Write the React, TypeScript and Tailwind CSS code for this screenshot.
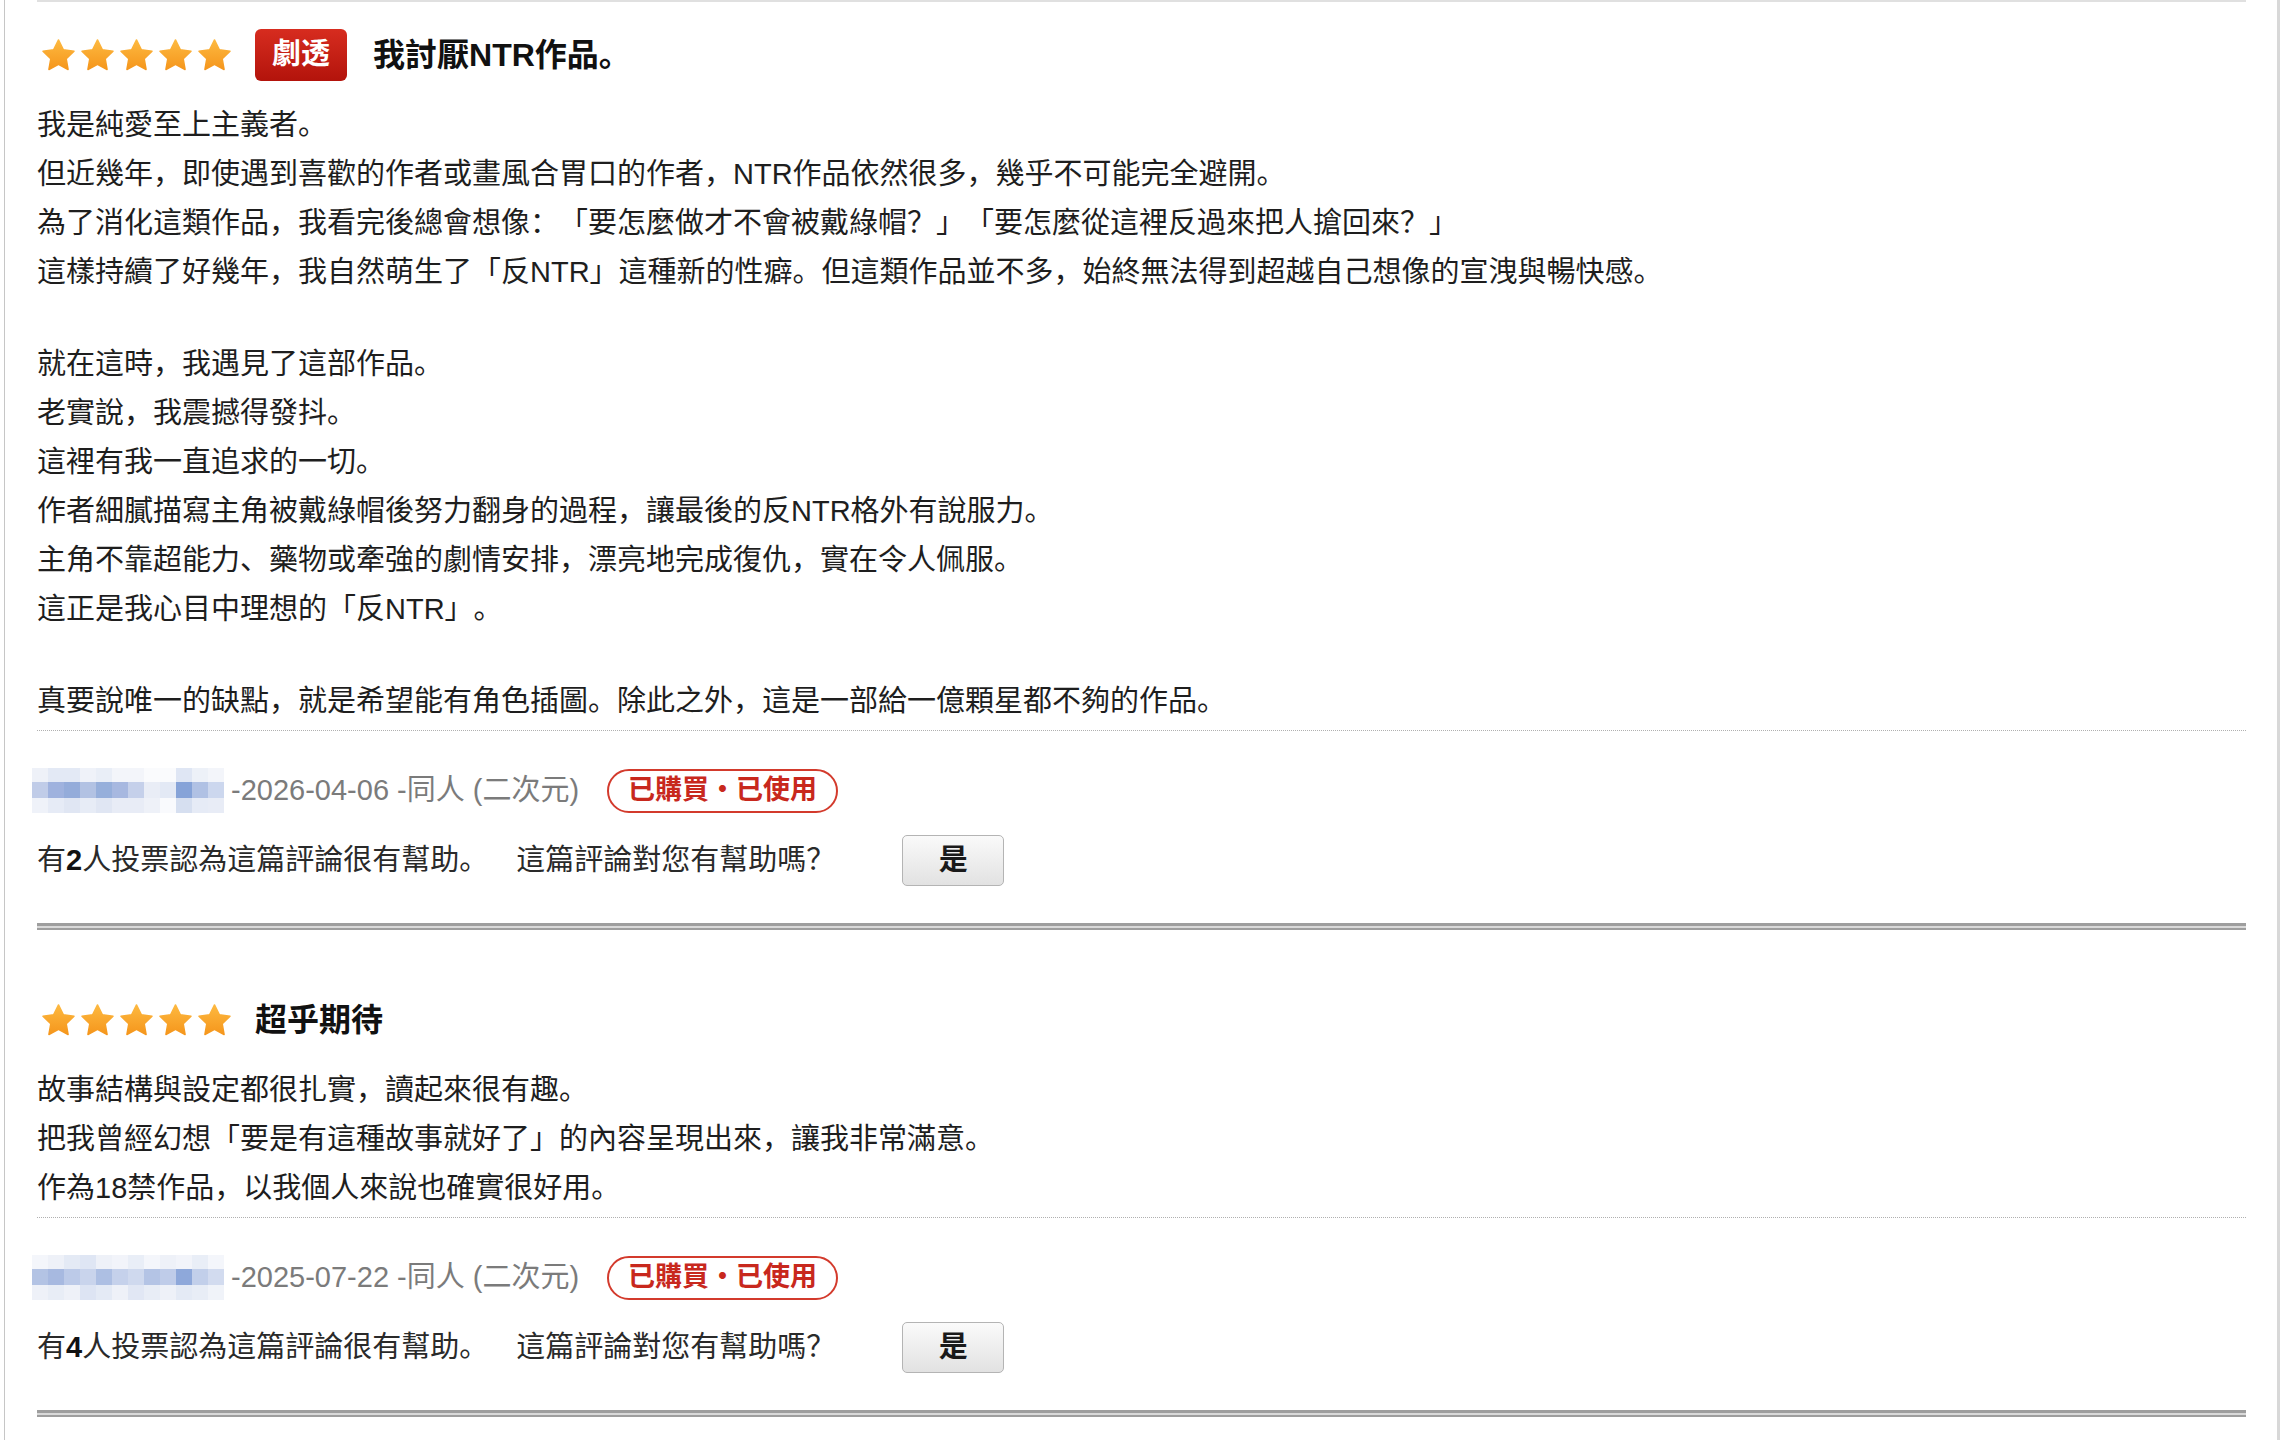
import type { ReactNode } from "react";

type Review = {
  title: string;
  spoiler?: boolean;
  paragraphs: string[][];
  date: string;
  category: string;
  helpful: number;
  mosaic: string[][];
};

const reviews: Review[] = [
  {
    title: "我討厭NTR作品。",
    spoiler: true,
    paragraphs: [
      [
        "我是純愛至上主義者。",
        "但近幾年，即使遇到喜歡的作者或畫風合胃口的作者，NTR作品依然很多，幾乎不可能完全避開。",
        "為了消化這類作品，我看完後總會想像：「要怎麼做才不會被戴綠帽？」「要怎麼從這裡反過來把人搶回來？」",
        "這樣持續了好幾年，我自然萌生了「反NTR」這種新的性癖。但這類作品並不多，始終無法得到超越自己想像的宣洩與暢快感。",
      ],
      [
        "就在這時，我遇見了這部作品。",
        "老實說，我震撼得發抖。",
        "這裡有我一直追求的一切。",
        "作者細膩描寫主角被戴綠帽後努力翻身的過程，讓最後的反NTR格外有說服力。",
        "主角不靠超能力、藥物或牽強的劇情安排，漂亮地完成復仇，實在令人佩服。",
        "這正是我心目中理想的「反NTR」。",
      ],
      ["真要說唯一的缺點，就是希望能有角色插圖。除此之外，這是一部給一億顆星都不夠的作品。"],
    ],
    date: "2026-04-06",
    category: "同人 (二次元)",
    helpful: 2,
    mosaic: [
      ["#eef1f8", "#e3e9f5", "#e3e9f5", "#eff2f9", "#e9eef7", "#f3f5fa", "#f3f5fa", "#fafbfd", "#fafbfd", "#dfe6f4", "#edf1f8", "#f3f5fa"],
      ["#c0cce8", "#9fb2de", "#94acda", "#b2c2e3", "#96afdb", "#a7b8e0", "#c5d0ea", "#e9edf6", "#e3e9f5", "#86a3d8", "#b0c1e4", "#ccd7ee"],
      ["#eff2f9", "#e6ebf6", "#e0e6f3", "#e7ecf6", "#e0e6f3", "#e8ecf6", "#e8ecf6", "#eef1f8", "#f9fafd", "#d6dff0", "#e6ebf6", "#e8ecf6"],
    ],
  },
  {
    title: "超乎期待",
    paragraphs: [
      [
        "故事結構與設定都很扎實，讀起來很有趣。",
        "把我曾經幻想「要是有這種故事就好了」的內容呈現出來，讓我非常滿意。",
        "作為18禁作品，以我個人來說也確實很好用。",
      ],
    ],
    date: "2025-07-22",
    category: "同人 (二次元)",
    helpful: 4,
    mosaic: [
      ["#f4f6fb", "#eef1f8", "#e4eaf5", "#dfe6f4", "#eef1f8", "#f2f4fa", "#e9eef7", "#f4f6fb", "#eef1f8", "#f2f4fa", "#e9eef7", "#f4f6fb"],
      ["#b3c3e4", "#a7b9e0", "#bccae8", "#c9d4ec", "#adbfe3", "#c5d1eb", "#cfd9ee", "#b4c4e5", "#bfcce9", "#8ea8da", "#c2cfea", "#d2dbef"],
      ["#eef1f8", "#e8edf6", "#eef1f8", "#dde4f3", "#e4eaf5", "#eef1f8", "#e1e7f4", "#e8edf6", "#eef1f8", "#e4eaf5", "#e8edf6", "#f0f3f9"],
    ],
  },
];

function Star() {
  return (
    <svg viewBox="0 0 24 24" className="h-[39px] w-[39px]">
      <defs>
        <linearGradient id="starFill" x1="0" y1="0" x2="0" y2="1">
          <stop offset="0%" stopColor="#fdb940" />
          <stop offset="100%" stopColor="#f5961c" />
        </linearGradient>
      </defs>
      <path
        d="M12 2.4l2.95 6.02 6.6.95-4.78 4.66 1.13 6.58L12 17.5l-5.9 3.11 1.13-6.58-4.78-4.66 6.6-.95z"
        fill="url(#starFill)"
        stroke="url(#starFill)"
        strokeWidth="0.9"
        strokeLinejoin="round"
      />
    </svg>
  );
}

// pixelated username block
function Mosaic({ cells }: { cells: string[][] }) {
  const rows = [0, 14, 30];
  const heights = [14, 16, 15];
  return (
    <svg width="192" height="45" className="-ml-[5px] shrink-0">
      {cells.map((row, r) =>
        row.map((c, i) => (
          <rect key={`${r}-${i}`} x={i * 16} y={rows[r]} width="16" height={heights[r]} fill={c} />
        ))
      )}
    </svg>
  );
}

function Pill({ children }: { children: ReactNode }) {
  return (
    <span className="flex h-[44px] items-center rounded-full border-2 border-[#d33a2c] px-[19px] text-[27px] font-bold text-[#c8281d]">
      {children}
    </span>
  );
}

function ReviewItem({ review, first }: { review: Review; first: boolean }) {
  return (
    <div className={first ? "pt-[27px]" : "pt-[64px]"}>
      <div className="flex h-[52px] items-center">
        <div className="ml-[2px] flex">
          {[0, 1, 2, 3, 4].map((i) => (
            <Star key={i} />
          ))}
        </div>
        {review.spoiler && (
          <span className="ml-[21px] flex h-[52px] items-center rounded-[6px] bg-gradient-to-b from-[#d72c1f] to-[#b3130b] px-[17px] text-[29px] font-bold text-white">
            劇透
          </span>
        )}
        <h3 className={`${review.spoiler ? "ml-[26px]" : "ml-[21px]"} text-[32px] font-bold text-[#111]`}>
          {review.title}
        </h3>
      </div>

      <div className="mt-[20px] mb-[4px] flex flex-col gap-[43px] text-[29px] leading-[49px] text-[#1e1e1e]">
        {review.paragraphs.map((lines, i) => (
          <p key={i}>
            {lines.map((line, j) => (
              <span key={j} className="block">
                {line}
              </span>
            ))}
          </p>
        ))}
      </div>

      <div className="border-t border-dotted border-[#b0b0b0]" />

      <div className="mt-[37px] flex h-[45px] items-center">
        <Mosaic cells={review.mosaic} />
        <span className="ml-[7px] text-[29px] text-[#7b7b7b]">
          -{review.date} -{review.category}
        </span>
        <span className="ml-[28px]">
          <Pill>已購買・已使用</Pill>
        </span>
      </div>

      <div className="mt-[22px] flex h-[51px] items-center text-[29px] text-[#2a2a2a]">
        <span>
          有<b className="font-bold text-[#111]">{review.helpful}</b>人投票認為這篇評論很有幫助。
        </span>
        <span className="ml-[28px]">這篇評論對您有幫助嗎？</span>
        <button className="ml-[67px] flex h-[51px] w-[102px] items-center justify-center rounded-[5px] border border-[#b4b4b4] bg-gradient-to-b from-[#fafafa] to-[#e2e2e2] text-[29px] font-bold text-[#1a1a1a]">
          是
        </button>
      </div>

      <div className="mt-[37px] h-[7px] border-t-[3px] border-b-[2px] border-[#9e9e9e] bg-[#d9d9d9]" />
    </div>
  );
}

export default function App() {
  return (
    <div className="min-h-screen bg-white font-['Liberation_Sans','Noto_Sans_CJK_SC',sans-serif] [text-spacing-trim:space-all]">
      <div className="ml-[4px] min-h-[1440px] w-[2276px] border-l border-r-[3px] border-l-[#c6c6c6] border-r-[#d8d8d8] pl-[32px] pr-[31px]">
        <div className="h-[2px] bg-[#e0e0e0]" />
        {reviews.map((r, i) => (
          <ReviewItem key={i} review={r} first={i === 0} />
        ))}
      </div>
    </div>
  );
}
